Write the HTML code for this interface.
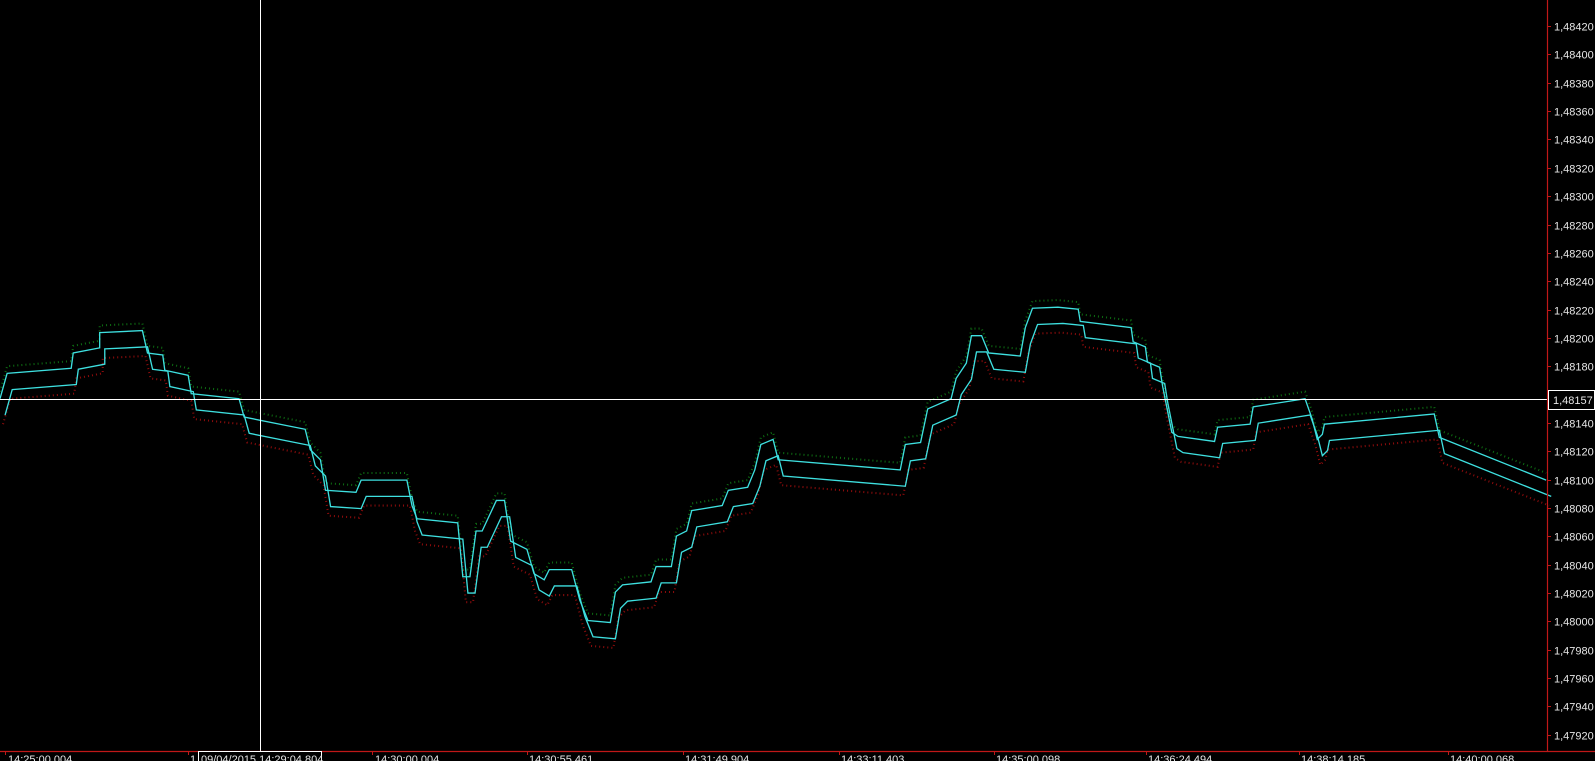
<!DOCTYPE html>
<html><head><meta charset="utf-8"><style>
html,body{margin:0;padding:0;background:#000;width:1595px;height:761px;overflow:hidden}
svg{display:block}
text{font-family:"Liberation Sans",sans-serif;font-size:11px;fill:#e6e6e6}
</style></head><body>
<svg width="1595" height="761" viewBox="0 0 1595 761">
<defs>
<polyline id="mid" fill="none" points="0,400 7,375 70,370 72,355 98,350 98,335 140,333 145,355 160,357 162,372 185,377 188,395 235,400 240,418 300,430 305,450 315,460 320,490 350,492 355,480 400,480 405,505 410,518 450,522 455,575 462,575 468,530 474,530 488,500 496,500 502,540 518,548 525,572 535,578 540,568 562,568 570,598 578,618 600,620 605,590 612,583 640,580 645,565 660,565 665,535 675,530 680,510 710,505 716,490 735,487 742,470 748,445 760,440 765,460 885,470 890,445 905,443 912,410 935,400 940,380 950,365 955,338 965,338 972,355 1003,358 1008,330 1015,311 1040,310 1060,312 1062,324 1112,330 1114,344 1126,349 1128,364 1140,369 1143,388 1148,413 1152,433 1158,437 1194,442 1197,428 1229,425 1232,408 1283,400 1290,420 1295,440 1300,435 1302,425 1410,415 1415,438 1520,480"/>
</defs>
<g transform="scale(1.0172)">
<g transform="translate(0,-15)"><use href="#mid" stroke="#0d6a12" stroke-width="2" stroke-dasharray="1 3"/></g>
<g transform="translate(3,17)"><use href="#mid" stroke="#8c0c0c" stroke-width="2" stroke-dasharray="1 3"/></g>
<g transform="translate(0,-8)"><use href="#mid" stroke="#3ee0e0" stroke-width="1.3"/></g>
<g transform="translate(5,8)"><use href="#mid" stroke="#3ee0e0" stroke-width="1.3"/></g>
</g>
<line x1="260.5" y1="0" x2="260.5" y2="751" stroke="#fff" stroke-width="1"/>
<line x1="0" y1="399.5" x2="1547" y2="399.5" stroke="#fff" stroke-width="1"/>
<line x1="1547.5" y1="0" x2="1547.5" y2="751" stroke="#c01818" stroke-width="1.2"/>
<line x1="0" y1="751.5" x2="1595" y2="751.5" stroke="#c01818" stroke-width="1.2"/>
<g stroke="#c01818" stroke-width="1">
<line x1="1547" y1="26.5" x2="1551" y2="26.5"/><line x1="1547" y1="54.5" x2="1551" y2="54.5"/><line x1="1547" y1="83.5" x2="1551" y2="83.5"/><line x1="1547" y1="111.5" x2="1551" y2="111.5"/><line x1="1547" y1="139.5" x2="1551" y2="139.5"/><line x1="1547" y1="168.5" x2="1551" y2="168.5"/><line x1="1547" y1="196.5" x2="1551" y2="196.5"/><line x1="1547" y1="225.5" x2="1551" y2="225.5"/><line x1="1547" y1="253.5" x2="1551" y2="253.5"/><line x1="1547" y1="281.5" x2="1551" y2="281.5"/><line x1="1547" y1="310.5" x2="1551" y2="310.5"/><line x1="1547" y1="338.5" x2="1551" y2="338.5"/><line x1="1547" y1="366.5" x2="1551" y2="366.5"/><line x1="1547" y1="423.5" x2="1551" y2="423.5"/><line x1="1547" y1="451.5" x2="1551" y2="451.5"/><line x1="1547" y1="480.5" x2="1551" y2="480.5"/><line x1="1547" y1="508.5" x2="1551" y2="508.5"/><line x1="1547" y1="536.5" x2="1551" y2="536.5"/><line x1="1547" y1="565.5" x2="1551" y2="565.5"/><line x1="1547" y1="593.5" x2="1551" y2="593.5"/><line x1="1547" y1="621.5" x2="1551" y2="621.5"/><line x1="1547" y1="650.5" x2="1551" y2="650.5"/><line x1="1547" y1="678.5" x2="1551" y2="678.5"/><line x1="1547" y1="706.5" x2="1551" y2="706.5"/><line x1="1547" y1="735.5" x2="1551" y2="735.5"/>
<line x1="5.5" y1="751" x2="5.5" y2="755"/><line x1="188.5" y1="751" x2="188.5" y2="755"/><line x1="372.5" y1="751" x2="372.5" y2="755"/><line x1="527.5" y1="751" x2="527.5" y2="755"/><line x1="683.5" y1="751" x2="683.5" y2="755"/><line x1="839.5" y1="751" x2="839.5" y2="755"/><line x1="994.5" y1="751" x2="994.5" y2="755"/><line x1="1146.5" y1="751" x2="1146.5" y2="755"/><line x1="1299.5" y1="751" x2="1299.5" y2="755"/><line x1="1448.5" y1="751" x2="1448.5" y2="755"/>
</g>
<g>
<text x="1554" y="30.5">1,48420</text><text x="1554" y="58.5">1,48400</text><text x="1554" y="87.5">1,48380</text><text x="1554" y="115.5">1,48360</text><text x="1554" y="143.5">1,48340</text><text x="1554" y="172.5">1,48320</text><text x="1554" y="200.5">1,48300</text><text x="1554" y="229.5">1,48280</text><text x="1554" y="257.5">1,48260</text><text x="1554" y="285.5">1,48240</text><text x="1554" y="314.5">1,48220</text><text x="1554" y="342.5">1,48200</text><text x="1554" y="370.5">1,48180</text><text x="1554" y="427.5">1,48140</text><text x="1554" y="455.5">1,48120</text><text x="1554" y="484.5">1,48100</text><text x="1554" y="512.5">1,48080</text><text x="1554" y="540.5">1,48060</text><text x="1554" y="569.5">1,48040</text><text x="1554" y="597.5">1,48020</text><text x="1554" y="625.5">1,48000</text><text x="1554" y="654.5">1,47980</text><text x="1554" y="682.5">1,47960</text><text x="1554" y="710.5">1,47940</text><text x="1554" y="739.5">1,47920</text>
</g>
<rect x="1548.5" y="390.5" width="46" height="19" fill="#000" stroke="#fff" stroke-width="1"/>
<text x="1553" y="404">1,48157</text>
<g>
<text x="8" y="763">14:25:00.004</text><text x="190" y="763">1</text>
<text x="375" y="763">14:30:00.004</text><text x="529" y="763">14:30:55.461</text><text x="685" y="763">14:31:49.904</text><text x="841" y="763">14:33:11.403</text><text x="996" y="763">14:35:00.098</text><text x="1148" y="763">14:36:24.494</text><text x="1301" y="763">14:38:14.185</text><text x="1450" y="763">14:40:00.068</text>
</g>
<rect x="198.5" y="751.5" width="123" height="20" fill="#000" stroke="#fff" stroke-width="1"/>
<text x="201" y="763">09/04/2015 14:29:04.804</text>
</svg>
</body></html>
